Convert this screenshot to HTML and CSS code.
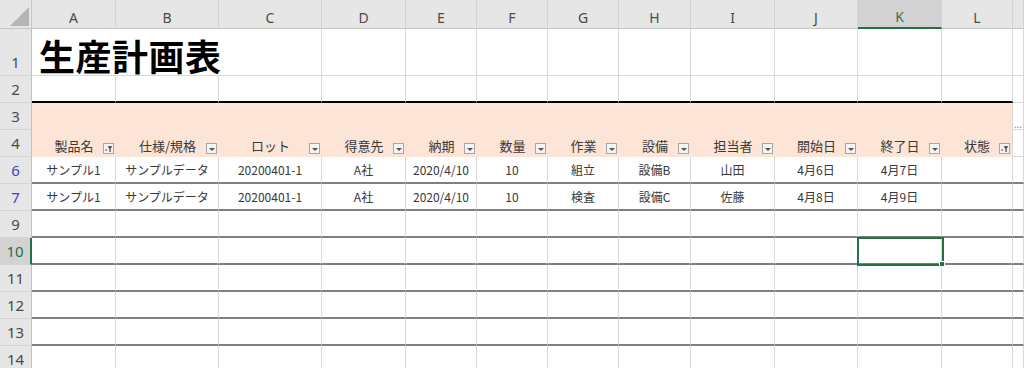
FILE: index.html
```html
<!DOCTYPE html>
<html lang="ja">

<head>
	<meta charset="UTF-8">
	<meta name="viewport" content="width=device-width, initial-scale=1.0">
	<title>生産計画表</title>
	<link rel="stylesheet" href="styles.css">
</head>

<body>
	<div id="sheet">
		<div class="row head">
			<div class="corner"><span class="tri"></span></div>
			<div class="ch">A</div>
			<div class="ch">B</div>
			<div class="ch">C</div>
			<div class="ch">D</div>
			<div class="ch">E</div>
			<div class="ch">F</div>
			<div class="ch">G</div>
			<div class="ch">H</div>
			<div class="ch">I</div>
			<div class="ch">J</div>
			<div class="ch sel">K</div>
			<div class="ch">L</div>
			<div class="ch"></div>
		</div>

		<div class="row r1">
			<div class="rh">1</div>
			<div class="cell spill"><h1>生産計画表</h1></div>
			<div class="cell spill"></div>
			<div class="cell"></div>
			<div class="cell"></div>
			<div class="cell"></div>
			<div class="cell"></div>
			<div class="cell"></div>
			<div class="cell"></div>
			<div class="cell"></div>
			<div class="cell"></div>
			<div class="cell"></div>
			<div class="cell"></div>
			<div class="cell"></div>
		</div>

		<div class="row r2">
			<div class="rh">2</div>
			<div class="cell t"></div>
			<div class="cell t"></div>
			<div class="cell t"></div>
			<div class="cell t"></div>
			<div class="cell t"></div>
			<div class="cell t"></div>
			<div class="cell t"></div>
			<div class="cell t"></div>
			<div class="cell t"></div>
			<div class="cell t"></div>
			<div class="cell t"></div>
			<div class="cell t"></div>
			<div class="cell"></div>
		</div>

		<div class="row band">
			<div class="rh">3</div>
			<div class="cell t"></div>
			<div class="cell t"></div>
			<div class="cell t"></div>
			<div class="cell t"></div>
			<div class="cell t"></div>
			<div class="cell t"></div>
			<div class="cell t"></div>
			<div class="cell t"></div>
			<div class="cell t"></div>
			<div class="cell t"></div>
			<div class="cell t"></div>
			<div class="cell t last"></div>
			<div class="cell more">…</div>
		</div>

		<div class="row band labels">
			<div class="rh">4</div>
			<div class="cell t">製品名<svg class="flt" viewBox="0 0 11 11"><rect x="0.5" y="0.5" width="10" height="10" fill="#f4f4f4" stroke="#a6a6a6"/><path d="M2 6.5h2.4l-1.2 1.6z M4.6 3.2h4.8l-1.8 2.2v3.6h-1.2v-3.6z" fill="#3c3c3c"/></svg></div>
			<div class="cell t">仕様/規格<span class="flt"></span></div>
			<div class="cell t">ロット<span class="flt"></span></div>
			<div class="cell t">得意先<span class="flt"></span></div>
			<div class="cell t">納期<span class="flt"></span></div>
			<div class="cell t">数量<span class="flt"></span></div>
			<div class="cell t">作業<span class="flt"></span></div>
			<div class="cell t">設備<span class="flt"></span></div>
			<div class="cell t">担当者<span class="flt"></span></div>
			<div class="cell t">開始日<span class="flt"></span></div>
			<div class="cell t">終了日<span class="flt"></span></div>
			<div class="cell t last">状態<svg class="flt" viewBox="0 0 11 11"><rect x="0.5" y="0.5" width="10" height="10" fill="#f4f4f4" stroke="#a6a6a6"/><path d="M2 6.5h2.4l-1.2 1.6z M4.6 3.2h4.8l-1.8 2.2v3.6h-1.2v-3.6z" fill="#3c3c3c"/></svg></div>
			<div class="cell"></div>
		</div>

		<div class="row lined">
			<div class="rh hit">6</div>
			<div class="cell">サンプル1</div>
			<div class="cell">サンプルデータ</div>
			<div class="cell">20200401-1</div>
			<div class="cell">A社</div>
			<div class="cell">2020/4/10</div>
			<div class="cell">10</div>
			<div class="cell">組立</div>
			<div class="cell">設備B</div>
			<div class="cell">山田</div>
			<div class="cell">4月6日</div>
			<div class="cell">4月7日</div>
			<div class="cell"></div>
			<div class="cell"></div>
		</div>

		<div class="row lined">
			<div class="rh hit">7</div>
			<div class="cell">サンプル1</div>
			<div class="cell">サンプルデータ</div>
			<div class="cell">20200401-1</div>
			<div class="cell">A社</div>
			<div class="cell">2020/4/10</div>
			<div class="cell">10</div>
			<div class="cell">検査</div>
			<div class="cell">設備C</div>
			<div class="cell">佐藤</div>
			<div class="cell">4月8日</div>
			<div class="cell">4月9日</div>
			<div class="cell"></div>
			<div class="cell"></div>
		</div>

		<div class="row lined">
			<div class="rh">9</div>
			<div class="cell"></div><div class="cell"></div><div class="cell"></div><div class="cell"></div>
			<div class="cell"></div><div class="cell"></div><div class="cell"></div><div class="cell"></div>
			<div class="cell"></div><div class="cell"></div><div class="cell"></div><div class="cell"></div>
			<div class="cell"></div>
		</div>

		<div class="row lined">
			<div class="rh sel">10</div>
			<div class="cell"></div><div class="cell"></div><div class="cell"></div><div class="cell"></div>
			<div class="cell"></div><div class="cell"></div><div class="cell"></div><div class="cell"></div>
			<div class="cell"></div><div class="cell"></div>
			<div class="cell active"><span class="handle"></span></div>
			<div class="cell"></div>
			<div class="cell"></div>
		</div>

		<div class="row lined">
			<div class="rh">11</div>
			<div class="cell"></div><div class="cell"></div><div class="cell"></div><div class="cell"></div>
			<div class="cell"></div><div class="cell"></div><div class="cell"></div><div class="cell"></div>
			<div class="cell"></div><div class="cell"></div><div class="cell"></div><div class="cell"></div>
			<div class="cell"></div>
		</div>

		<div class="row lined">
			<div class="rh">12</div>
			<div class="cell"></div><div class="cell"></div><div class="cell"></div><div class="cell"></div>
			<div class="cell"></div><div class="cell"></div><div class="cell"></div><div class="cell"></div>
			<div class="cell"></div><div class="cell"></div><div class="cell"></div><div class="cell"></div>
			<div class="cell"></div>
		</div>

		<div class="row lined">
			<div class="rh">13</div>
			<div class="cell"></div><div class="cell"></div><div class="cell"></div><div class="cell"></div>
			<div class="cell"></div><div class="cell"></div><div class="cell"></div><div class="cell"></div>
			<div class="cell"></div><div class="cell"></div><div class="cell"></div><div class="cell"></div>
			<div class="cell"></div>
		</div>

		<div class="row lined">
			<div class="rh">14</div>
			<div class="cell"></div><div class="cell"></div><div class="cell"></div><div class="cell"></div>
			<div class="cell"></div><div class="cell"></div><div class="cell"></div><div class="cell"></div>
			<div class="cell"></div><div class="cell"></div><div class="cell"></div><div class="cell"></div>
			<div class="cell"></div>
		</div>
	</div>
</body>

</html>
```

FILE: styles.css
```css
:root {
	--cols: 32px 84px 103px 103px 84px 71px 71px 71px 72px 84px 83px 84px 71px 1fr;
	--grid: #d9d9d9;
	--head: #e6e6e6;
	--green: #217346;
}

body {
	margin: 0;
	overflow: hidden;
	font-family: "Noto Sans CJK JP", sans-serif;
	font-size: 12px;
	color: #383838;
	background: #fff;
}

.row {
	display: grid;
	grid-template-columns: var(--cols);
	height: 27px;
}

.row > div {
	box-sizing: border-box;
	display: flex;
	align-items: center;
	justify-content: center;
	min-width: 0;
	white-space: nowrap;
	border-right: 1px solid var(--grid);
	border-bottom: 1px solid var(--grid);
}

/* column letters */
.row.head {
	height: 29px;
}

.corner {
	background: var(--head);
	align-items: flex-end !important;
	justify-content: flex-end !important;
	padding: 0 2px 2px 0;
	border-color: #c8c8c8 !important;
}

.tri {
	width: 19px;
	height: 19px;
	background: #b5b5b5;
	clip-path: polygon(100% 0, 100% 100%, 0 100%);
}

.ch {
	background: var(--head);
	align-items: flex-end !important;
	padding-bottom: 2px;
	font-family: "Noto Sans", sans-serif;
	font-size: 14px;
	line-height: 17px;
	color: #4a4a4a;
	border-right-color: #d2d2d2 !important;
	border-bottom-color: #c6c6c6 !important;
}

.ch.sel {
	background: #d2d2d2;
	color: #3d6b52;
	border-bottom: 2px solid var(--green) !important;
}

/* row numbers */
.rh {
	background: var(--head);
	align-items: flex-end !important;
	padding-bottom: 4px;
	font-family: "Noto Sans", sans-serif;
	font-size: 15px;
	line-height: 18px;
	color: #4a4a4a;
	border-right-color: #c2c2c2 !important;
	border-bottom-color: #d4d4d4 !important;
}

.rh.hit {
	color: #4141c8;
}

.rh.sel {
	background: #d2d2d2;
	color: var(--green);
	border-right: 2px solid var(--green) !important;
}

/* title */
.row.r1 {
	height: 47px;
}

.cell.spill {
	border-right: none;
	justify-content: flex-start;
	align-items: flex-end;
	overflow: visible;
}

h1 {
	margin: 0 0 2px 7px;
	font-size: 36px;
	line-height: 36px;
	font-weight: 700;
	letter-spacing: 0.5px;
	color: #000;
}

.row.r2 .cell.t {
	border-bottom: 2px solid #000;
}

/* table header band */
.row.band .cell.t {
	position: relative;
	background: #fce4d6;
	border-right: none;
	border-bottom: none;
}

.row.band .cell.last {
	border-right: 1px solid var(--grid);
}

.row.labels .cell.t {
	padding-top: 3px;
	font-size: 13px;
	color: #3a3a3a;
}

.flt {
	position: absolute;
	right: 2px;
	bottom: 3px;
	width: 11px;
	height: 11px;
	box-sizing: border-box;
}

span.flt {
	display: flex;
	justify-content: center;
	align-items: center;
	padding-top: 2px;
	background: #f4f4f4;
	border: 1px solid #a6a6a6;
}

span.flt::after {
	content: "";
	border-top: 3px solid #555;
	border-left: 3px solid transparent;
	border-right: 3px solid transparent;
}

.cell.more {
	align-items: flex-end;
	font-family: "Noto Sans", sans-serif;
	font-size: 10px;
	line-height: 10px;
	color: #8a8a8a;
}

/* data and empty rows */
.row.lined .cell {
	border-bottom: 2px solid #7f7f7f;
}

.cell.active {
	position: relative;
}

.cell.active::after {
	content: "";
	position: absolute;
	inset: -1px -3px -3px -1px;
	border: 2px solid var(--green);
	z-index: 1;
}

.handle {
	position: absolute;
	right: -4px;
	bottom: -4px;
	width: 6px;
	height: 6px;
	box-sizing: border-box;
	background: var(--green);
	border: 1px solid #fff;
	z-index: 2;
}
```
